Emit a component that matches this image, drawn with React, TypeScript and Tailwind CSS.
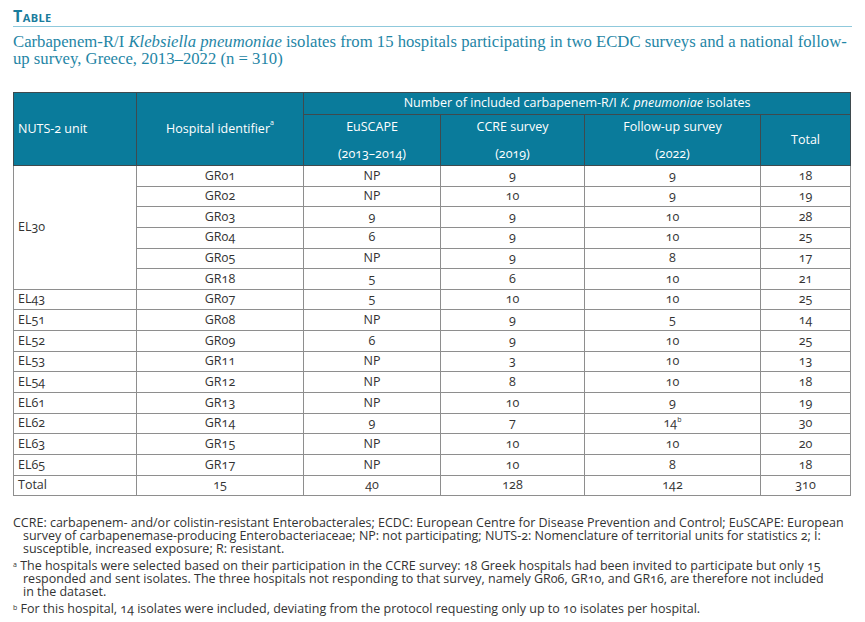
import React from "react";

const rows = [
  { unit: "EL30", span: 6, id: "GR01", eu: "NP", ccre: "9", fu: "9", total: "18" },
  { id: "GR02", eu: "NP", ccre: "10", fu: "9", total: "19" },
  { id: "GR03", eu: "9", ccre: "9", fu: "10", total: "28" },
  { id: "GR04", eu: "6", ccre: "9", fu: "10", total: "25" },
  { id: "GR05", eu: "NP", ccre: "9", fu: "8", total: "17" },
  { id: "GR18", eu: "5", ccre: "6", fu: "10", total: "21" },
  { unit: "EL43", id: "GR07", eu: "5", ccre: "10", fu: "10", total: "25" },
  { unit: "EL51", id: "GR08", eu: "NP", ccre: "9", fu: "5", total: "14" },
  { unit: "EL52", id: "GR09", eu: "6", ccre: "9", fu: "10", total: "25" },
  { unit: "EL53", id: "GR11", eu: "NP", ccre: "3", fu: "10", total: "13" },
  { unit: "EL54", id: "GR12", eu: "NP", ccre: "8", fu: "10", total: "18" },
  { unit: "EL61", id: "GR13", eu: "NP", ccre: "10", fu: "9", total: "19" },
  { unit: "EL62", id: "GR14", eu: "9", ccre: "7", fu: "14", sup: "b", total: "30" },
  { unit: "EL63", id: "GR15", eu: "NP", ccre: "10", fu: "10", total: "20" },
  { unit: "EL65", id: "GR17", eu: "NP", ccre: "10", fu: "8", total: "18" },
  { unit: "Total", id: "15", eu: "40", ccre: "128", fu: "142", total: "310" },
];

const td = "border border-[#8e8e8e] text-center align-middle leading-none";

export default function App() {
  return (
    <div className="w-[865px] h-[622px] bg-white px-[13px] pt-[8px] text-[#333]" style={{ fontFamily: "'Open Sans', 'Noto Sans', sans-serif" }}>
      <div className="border-b border-[#8fc9dc] pb-[2px]">
        <h1 className="text-[#1a7c9c] font-bold text-[16px] leading-[16px] [font-variant:small-caps] tracking-[0.4px]">Table</h1>
      </div>
      <p className="mt-[6px] text-[#1f86a6] text-[16.7px] leading-[17px]" style={{ fontFamily: "'Liberation Serif', serif" }}>
        <span className="block whitespace-nowrap">
          Carbapenem-R/I <i>Klebsiella pneumoniae</i> isolates from 15 hospitals participating in two ECDC surveys and a national follow-
        </span>
        <span className="block whitespace-nowrap">up survey, Greece, 2013–2022 (n = 310)</span>
      </p>

      <table className="mt-[25px] w-[837px] table-fixed border-collapse text-[12.5px] oldstyle-nums">
        <colgroup>
          <col className="w-[123px]" />
          <col className="w-[167px]" />
          <col className="w-[137px]" />
          <col className="w-[144px]" />
          <col className="w-[176px]" />
          <col className="w-[90px]" />
        </colgroup>
        <thead className="bg-[#0a7b9b] text-white">
          <tr className="h-[22px]">
            <th rowSpan={2} className="border border-[#3f4a4e] text-left font-normal pl-[4px]">NUTS-2 unit</th>
            <th rowSpan={2} className="border border-[#3f4a4e] font-normal">
              Hospital identifier<sup className="text-[7px] align-[4px] leading-none">a</sup>
            </th>
            <th colSpan={4} className="border border-[#3f4a4e] font-normal">
              Number of included carbapenem-R/I <i>K. pneumoniae</i> isolates
            </th>
          </tr>
          <tr className="h-[50px]">
            {[["EuSCAPE", "(2013–2014)"], ["CCRE survey", "(2019)"], ["Follow-up survey", "(2022)"]].map(([a, b]) => (
              <th key={a} className="border border-[#3f4a4e] font-normal p-0">
                <div className="flex flex-col justify-between h-[50px] pt-[4px] pb-[3px] leading-[16px]">
                  <span>{a}</span>
                  <span>{b}</span>
                </div>
              </th>
            ))}
            <th className="border border-[#3f4a4e] font-normal">Total</th>
          </tr>
        </thead>
        <tbody>
          {rows.map((r) => (
            <tr key={r.id} className="h-[20.65px]">
              {r.unit && (
                <td rowSpan={r.span || 1} className="border border-[#8e8e8e] text-left pl-[4px] align-middle leading-none">
                  {r.unit}
                </td>
              )}
              <td className={td}>{r.id}</td>
              <td className={td}>{r.eu}</td>
              <td className={td}>{r.ccre}</td>
              <td className={td}>
                {r.fu}
                {r.sup && <sup className="text-[7px] align-[2px] leading-none">{r.sup}</sup>}
              </td>
              <td className={td}>{r.total}</td>
            </tr>
          ))}
        </tbody>
      </table>

      <div className="mt-[20px] text-[12.5px] leading-[13px] text-[#333] oldstyle-nums flex flex-col gap-[4px]">
        <p className="pl-[10px]">
          <span className="block whitespace-nowrap -ml-[10px]">CCRE: carbapenem- and/or colistin-resistant Enterobacterales; ECDC: European Centre for Disease Prevention and Control; EuSCAPE: European</span>
          <span className="block whitespace-nowrap">survey of carbapenemase-producing Enterobacteriaceae; NP: not participating; NUTS-2: Nomenclature of territorial units for statistics 2; I:</span>
          <span className="block whitespace-nowrap">susceptible, increased exposure; R: resistant.</span>
        </p>
        <p className="pl-[10px]">
          <span className="block whitespace-nowrap -ml-[10px]"><span className="text-[7px] relative -top-[3px] leading-none">a</span> The hospitals were selected based on their participation in the CCRE survey: 18 Greek hospitals had been invited to participate but only 15</span>
          <span className="block whitespace-nowrap">responded and sent isolates. The three hospitals not responding to that survey, namely GR06, GR10, and GR16, are therefore not included</span>
          <span className="block whitespace-nowrap">in the dataset.</span>
        </p>
        <p className="whitespace-nowrap">
          <span className="text-[7px] relative -top-[3px] leading-none">b</span> For this hospital, 14 isolates were included, deviating from the protocol requesting only up to 10 isolates per hospital.
        </p>
      </div>
    </div>
  );
}
